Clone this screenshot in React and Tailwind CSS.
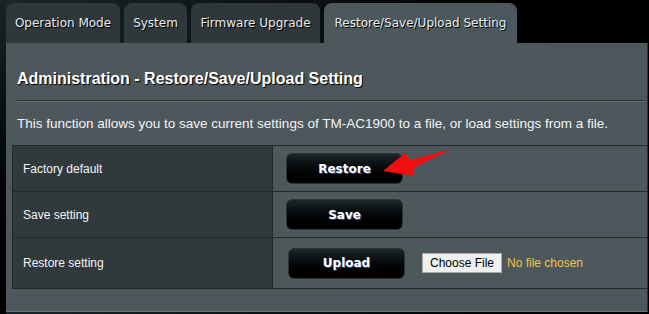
import React from "react";

const tabFont = { fontFamily: '"DejaVu Sans", Verdana, sans-serif' };

function Tab({ label, w, active }) {
  return (
    <div
      className={`h-[40px] ${w} rounded-t-[8px] flex items-center justify-center text-[12px] text-[#e4ecf0] [text-shadow:1px_1px_0_#000] ${
        active ? "bg-[#4d585c]" : "bg-[#2f373a]"
      }`}
      style={tabFont}
    >
      {label}
    </div>
  );
}

function Btn({ label, ml }) {
  return (
    <div
      className={`${ml} w-[117px] h-[31px] rounded-[6px] border border-[#2b3336] bg-gradient-to-b from-[#1d2629] to-[#000] flex items-center justify-center text-white font-bold text-[12px] [text-shadow:1px_1px_0_#3a4a80] shadow-[0_0_0_1px_#56616479]`}
      style={tabFont}
    >
      {label}
    </div>
  );
}

export default function App() {
  return (
    <div
      className="relative w-[649px] h-[314px] overflow-hidden bg-gradient-to-r from-[#18262b] via-[#070a0b] via-60% to-black flex"
      style={{ fontFamily: '"Liberation Sans", Arial, sans-serif' }}
    >
      <div className="w-[6px] bg-gradient-to-b from-[#1a2528] to-black" />
      <div className="flex flex-col">
        <div className="h-[43px] pt-[3px] flex gap-[4px]">
          <Tab label="Operation Mode" w="w-[114px]" />
          <Tab label="System" w="w-[63px]" />
          <Tab label="Firmware Upgrade" w="w-[129px]" />
          <Tab label="Restore/Save/Upload Setting" w="w-[193px]" active />
        </div>
        <div className="w-[642px] h-[269px] bg-[#4d585c] border-r border-[#2a3133] border-b border-b-[#6a7477] flex flex-col">
          <div className="pl-[11px] pt-[26px] pr-[1px]">
            <div className="text-[16px] leading-[20px] font-bold text-white [text-shadow:1px_1px_1px_#000]">
              Administration - Restore/Save/Upload Setting
            </div>
            <div className="mt-[11px] h-[2px] border-t border-[#2c3437] border-b border-b-[#667175]" />
            <div className="mt-[14px] text-[13.5px] leading-[16px] text-[#f2f4f5]">
              This function allows you to save current settings of TM-AC1900 to a file, or load settings from a file.
            </div>
          </div>
          <div className="ml-[6px] mt-[13px] w-[636px] border-t border-b border-l border-[#22292b] grid grid-cols-[260px_1fr] text-[12px] text-[#f2f4f5]">
            <div className="h-[46px] bg-[#30393c] border-r border-b border-[#22292b] pl-[10px] flex items-center">
              Factory default
            </div>
            <div className="h-[46px] border-b border-[#22292b] flex items-center">
              <Btn label="Restore" ml="ml-[13px]" />
            </div>
            <div className="h-[46px] bg-[#30393c] border-r border-b border-[#22292b] pl-[10px] flex items-center">
              Save setting
            </div>
            <div className="h-[46px] border-b border-[#22292b] flex items-center">
              <Btn label="Save" ml="ml-[13px]" />
            </div>
            <div className="h-[50px] bg-[#30393c] border-r border-[#22292b] pl-[10px] flex items-center">
              Restore setting
            </div>
            <div className="h-[50px] flex items-center">
              <Btn label="Upload" ml="ml-[15px]" />
              <div className="ml-[17px] w-[80px] h-[20px] bg-[#efefef] border border-[#a9a9a9] flex items-center justify-center text-[12px] text-black">
                Choose File
              </div>
              <span className="ml-[5px] text-[12px] text-[#f5c242]">No file chosen</span>
            </div>
          </div>
        </div>
      </div>
      <svg className="absolute left-0 top-0" width="649" height="314" viewBox="0 0 649 314">
        <polygon
          points="383,171 405,153 410,160 452,149 415,167 413,176"
          fill="#f00f0f"
        />
      </svg>
    </div>
  );
}
